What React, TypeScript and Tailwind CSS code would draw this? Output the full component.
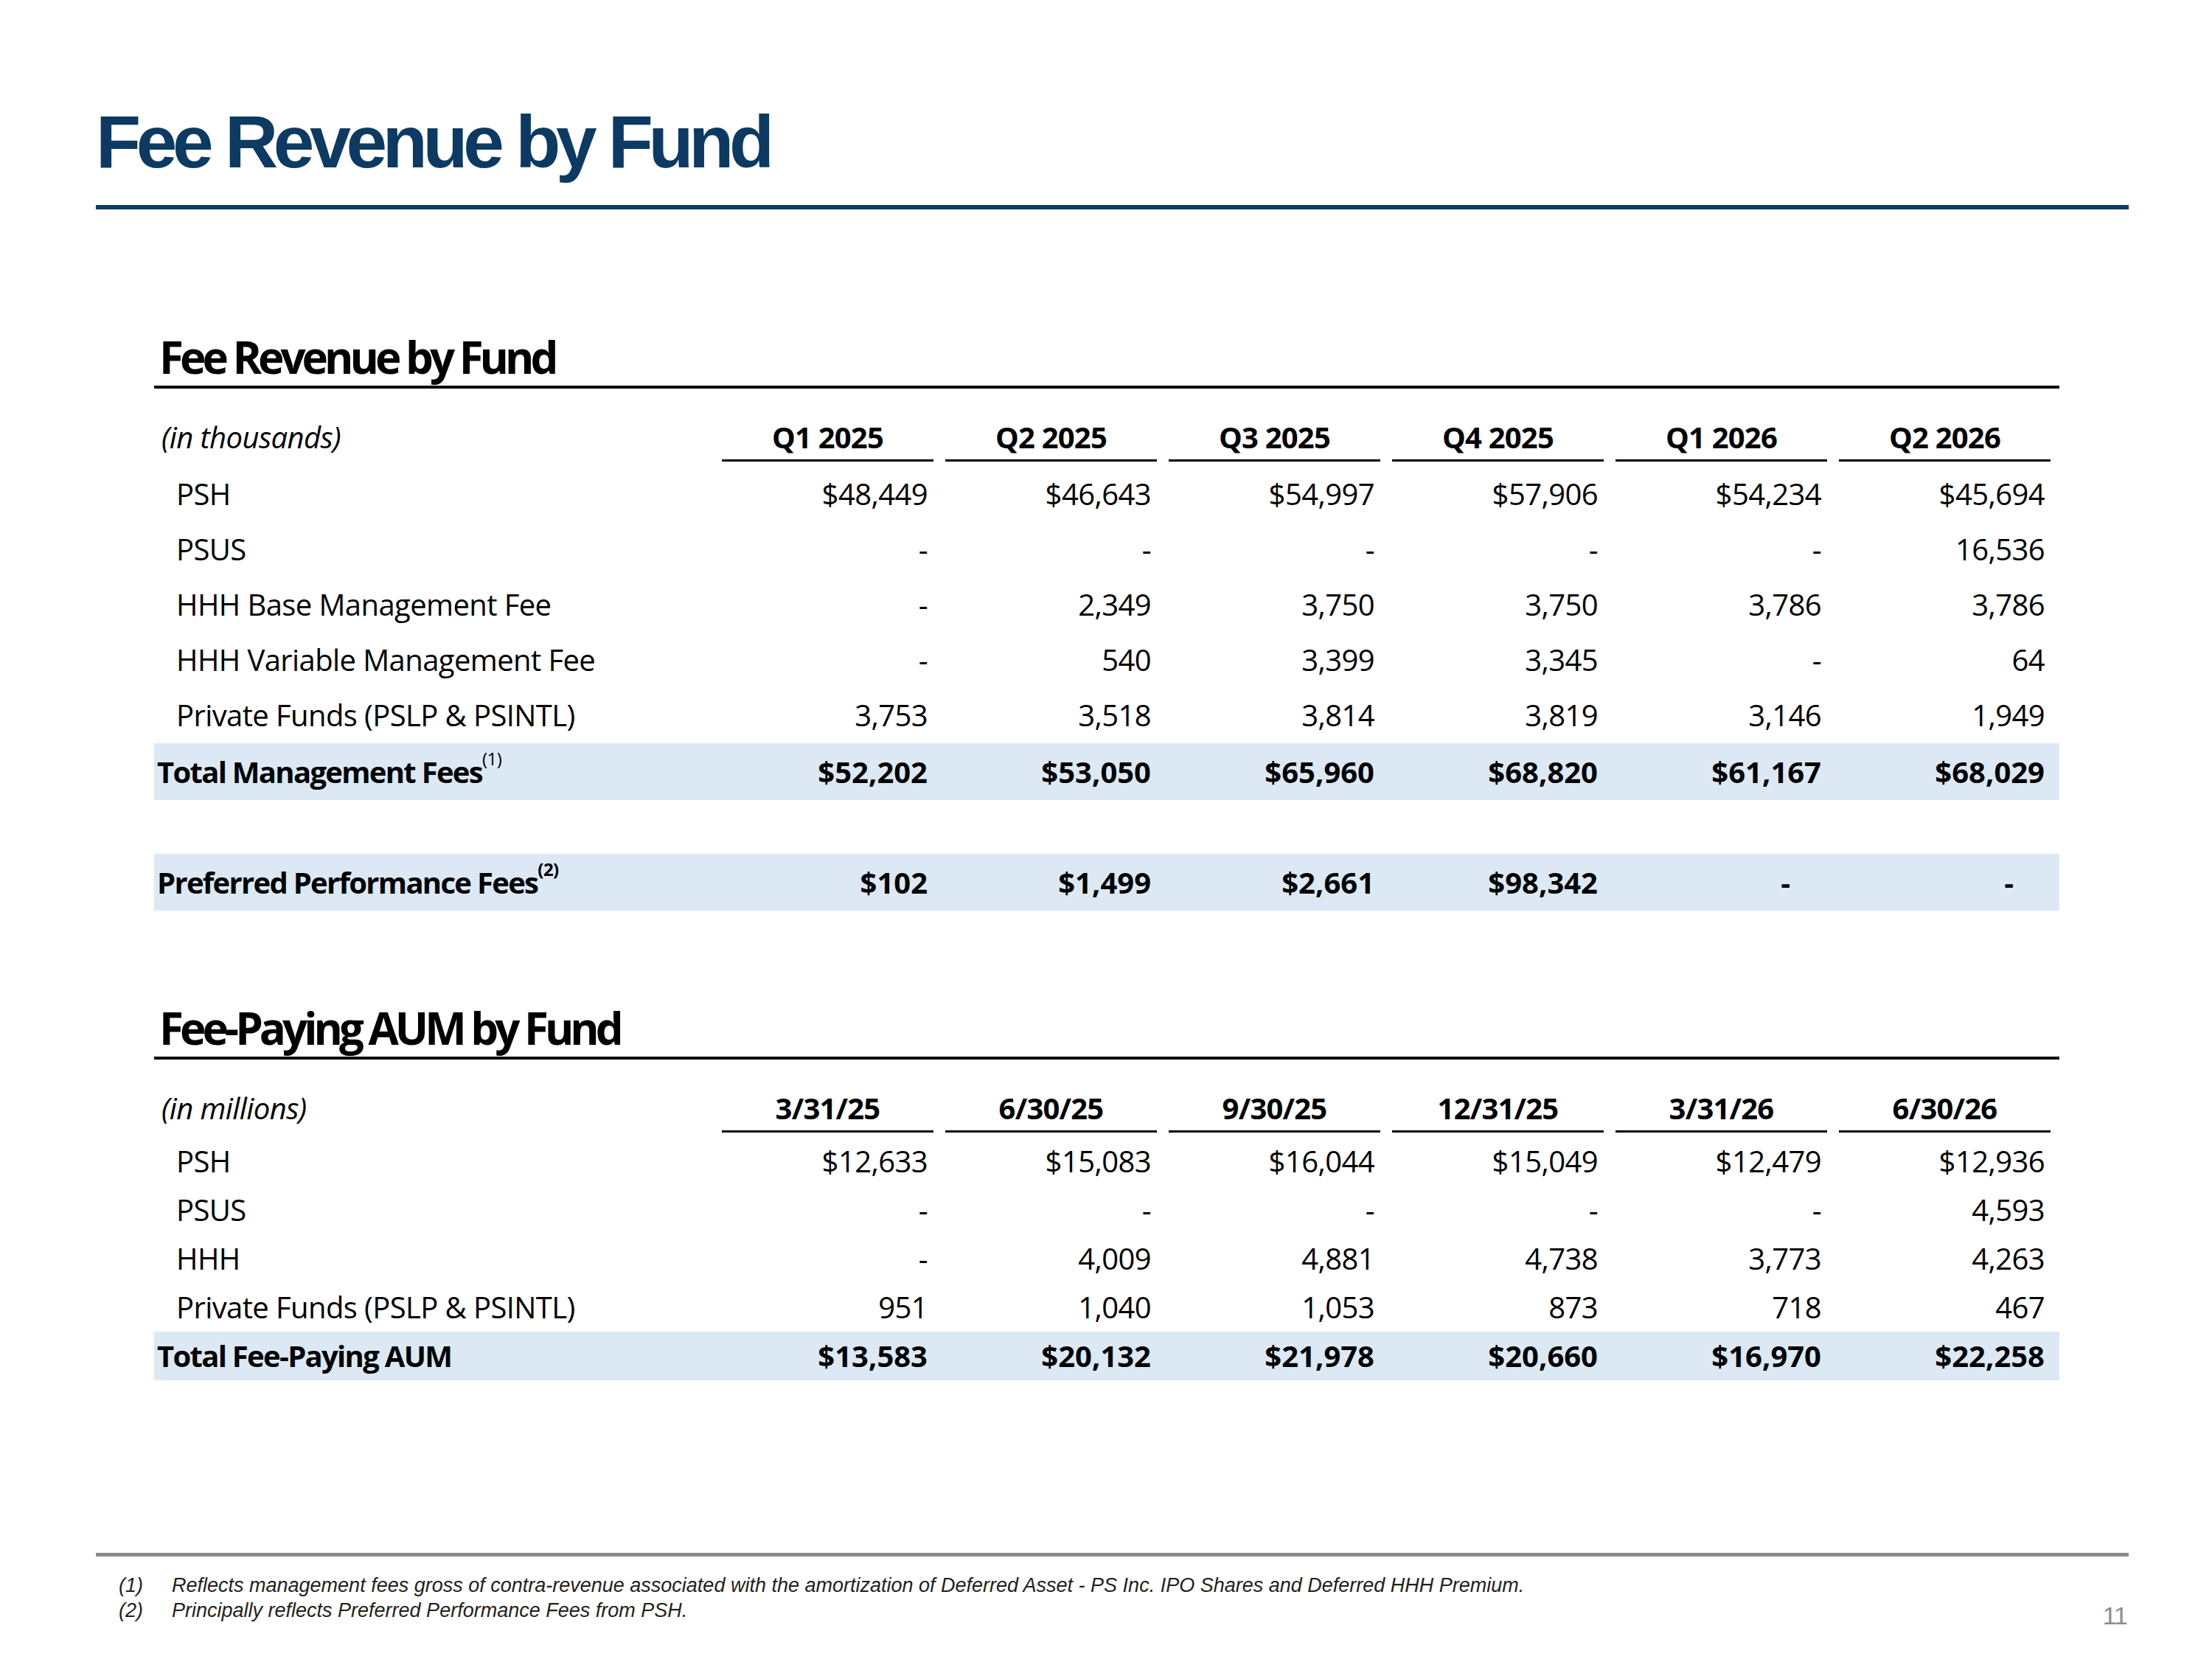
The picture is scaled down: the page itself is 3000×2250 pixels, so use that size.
const grid = 'grid grid-cols-[754px_repeat(6,287px)] gap-x-[16px] pr-[12px]'

const quarters = ['Q1 2025', 'Q2 2025', 'Q3 2025', 'Q4 2025', 'Q1 2026', 'Q2 2026']
const dates = ['3/31/25', '6/30/25', '9/30/25', '12/31/25', '3/31/26', '6/30/26']

const feeRows = [
  { label: 'PSH', values: ['$48,449', '$46,643', '$54,997', '$57,906', '$54,234', '$45,694'] },
  { label: 'PSUS', values: ['-', '-', '-', '-', '-', '16,536'] },
  { label: 'HHH Base Management Fee', values: ['-', '2,349', '3,750', '3,750', '3,786', '3,786'] },
  { label: 'HHH Variable Management Fee', values: ['-', '540', '3,399', '3,345', '-', '64'] },
  { label: 'Private Funds (PSLP & PSINTL)', values: ['3,753', '3,518', '3,814', '3,819', '3,146', '1,949'] },
]

const aumRows = [
  { label: 'PSH', values: ['$12,633', '$15,083', '$16,044', '$15,049', '$12,479', '$12,936'] },
  { label: 'PSUS', values: ['-', '-', '-', '-', '-', '4,593'] },
  { label: 'HHH', values: ['-', '4,009', '4,881', '4,738', '3,773', '4,263'] },
  { label: 'Private Funds (PSLP & PSINTL)', values: ['951', '1,040', '1,053', '873', '718', '467'] },
]

function SectionTitle({ children }: { children: string }) {
  return (
    <>
      <h2 className="pl-[7px] text-[60px] leading-[60px] font-bold tracking-[-5px] text-black">{children}</h2>
      <div className="mt-[9px] h-[4px] bg-black" />
    </>
  )
}

function HeaderRow({ label, cols }: { label: string; cols: string[] }) {
  return (
    <div className={`${grid} mt-[46px] text-[40px] leading-[40px]`}>
      <div className="pl-[10px] italic tracking-[-0.6px]">{label}</div>
      {cols.map((c) => (
        <div key={c} className="pb-[10px] border-b-[3px] border-black text-center font-bold tracking-[-0.8px]">
          {c}
        </div>
      ))}
    </div>
  )
}

function DataRow({ label, values, height }: { label: string; values: string[]; height: string }) {
  return (
    <div className={`${grid} ${height} items-center text-[40px] leading-[40px] tracking-[-0.6px]`}>
      <div className="pl-[30px] whitespace-nowrap">{label}</div>
      {values.map((v, i) => (
        <div key={i} className="pr-[8px] text-right">
          {v}
        </div>
      ))}
    </div>
  )
}

function TotalRow({
  label,
  note,
  values,
  height,
  boldNote,
}: {
  label: string
  note?: string
  values: string[]
  height: string
  boldNote?: boolean
}) {
  return (
    <div className={`${grid} ${height} items-center bg-[#dce9f5] text-[40px] leading-[40px] font-bold`}>
      <div className="pl-[4px] whitespace-nowrap tracking-[-1.7px]">
        {label}
        {note && (
          <sup className={`text-[24px] -top-[24px] tracking-[-0.5px] ${boldNote ? 'font-bold' : 'font-normal'}`}>
            {note}
          </sup>
        )}
      </div>
      {values.map((v, i) => (
        <div key={i} className={`text-right ${v === '-' ? 'pr-[50px]' : 'pr-[8px]'}`}>
          {v}
        </div>
      ))}
    </div>
  )
}

export default function App() {
  return (
    <div className="relative w-[3000px] h-[2250px] bg-white pt-[142px] pl-[130px] pr-[113px] text-black">
      {/* Slide title */}
      <h1 className="font-['Liberation_Sans',Arial,sans-serif] text-[100px] leading-[100px] font-bold tracking-[-6.3px] text-[#0c3a62]">
        Fee Revenue by Fund
      </h1>
      <div className="mt-[36px] h-[6px] bg-[#0c3a62]" />

      {/* Tables */}
      <div className="ml-[79px] mr-[94px] mt-[170px] font-['Open_Sans',sans-serif]">
        <SectionTitle>Fee Revenue by Fund</SectionTitle>
        <HeaderRow label="(in thousands)" cols={quarters} />
        <div className="mt-[6px]">
          {feeRows.map((r) => (
            <DataRow key={r.label} label={r.label} values={r.values} height="h-[75px]" />
          ))}
        </div>
        <div className="mt-[1px]">
          <TotalRow
            label="Total Management Fees"
            note="(1)"
            height="h-[77px]"
            values={['$52,202', '$53,050', '$65,960', '$68,820', '$61,167', '$68,029']}
          />
        </div>
        <div className="mt-[73px]">
          <TotalRow
            label="Preferred Performance Fees"
            note="(2)"
            boldNote
            height="h-[77px]"
            values={['$102', '$1,499', '$2,661', '$98,342', '-', '-']}
          />
        </div>

        <div className="mt-[129px]">
          <SectionTitle>Fee-Paying AUM by Fund</SectionTitle>
        </div>
        <HeaderRow label="(in millions)" cols={dates} />
        <div className="mt-[6px]">
          {aumRows.map((r) => (
            <DataRow key={r.label} label={r.label} values={r.values} height="h-[66px]" />
          ))}
        </div>
        <TotalRow
          label="Total Fee-Paying AUM"
          height="h-[66px]"
          values={['$13,583', '$20,132', '$21,978', '$20,660', '$16,970', '$22,258']}
        />
      </div>

      {/* Footnotes */}
      <div className="mt-[234px] h-[5px] bg-[#8a8a8a]" />
      <div className="mt-[22px] flex justify-between font-['Liberation_Sans',Arial,sans-serif]">
        <div className="pl-[31px] text-[27px] leading-[34px] italic text-[#1f1f1f]">
          <div className="flex">
            <span className="w-[72px]">(1)</span>
            <span>
              Reflects management fees gross of contra-revenue associated with the amortization of Deferred Asset - PS
              Inc. IPO Shares and Deferred HHH Premium.
            </span>
          </div>
          <div className="flex">
            <span className="w-[72px]">(2)</span>
            <span>Principally reflects Preferred Performance Fees from PSH.</span>
          </div>
        </div>
        <div className="mt-[41px] pr-[2px] text-[34px] leading-[34px] tracking-[-1px] text-[#8c8c8c]">11</div>
      </div>
    </div>
  )
}
